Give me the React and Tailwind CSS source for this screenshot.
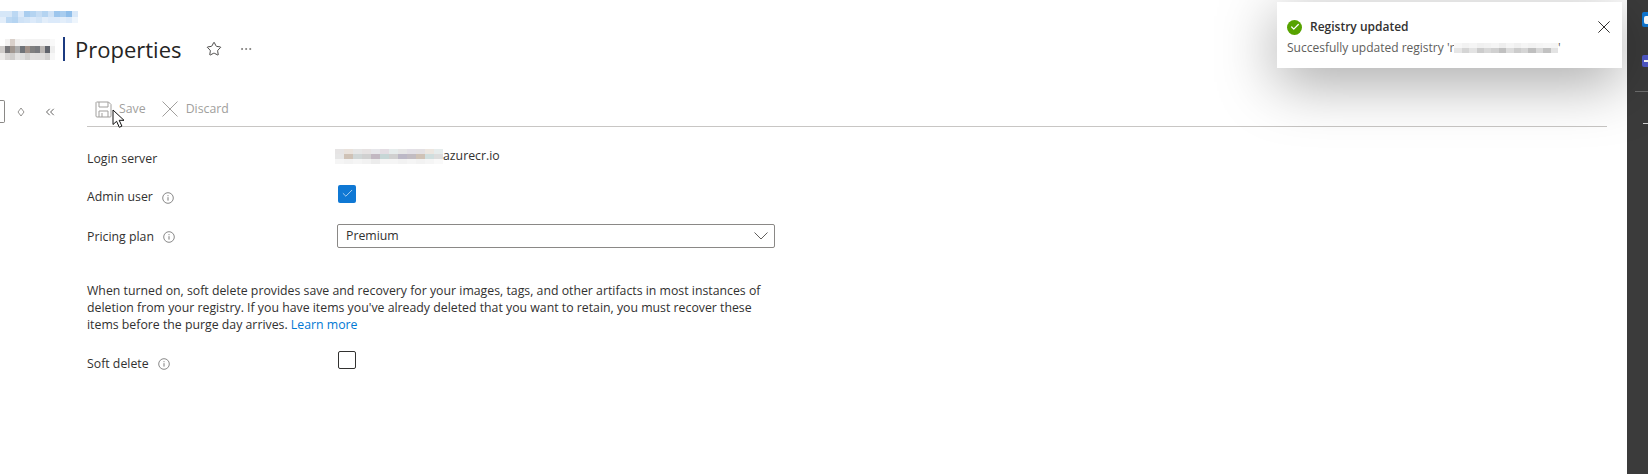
import React from "react";
import { Star, MoreHorizontal, ChevronsLeft, Check } from "lucide-react";

const font = "font-['Open_Sans','Noto_Sans',sans-serif]";

// blurred-out bits of the screenshot, each cell is one mosaic block
function Mosaic({ rows, cell = 6, rowHeight = 5 }) {
  return (
    <div className="flex flex-col shrink-0">
      {rows.map((row, i) => (
        <div key={i} className="flex">
          {row.map((c, j) => (
            <div key={j} style={{ background: c, width: cell, height: rowHeight }} />
          ))}
        </div>
      ))}
    </div>
  );
}

const crumb = [
  ["#d6e7f8", "#d6e7f8", "#bcd8f3", "#dceafa", "#a9cdef", "#b5d4f1", "#c6ddf4", "#b5d4f1", "#cfe2f6", "#9dc6ed", "#a9cdef", "#8fbeea", "#d9e8f8"],
  ["#e3eefa", "#bcd8f3", "#b5d4f1", "#cfe2f6", "#d3e5f7", "#dceafa", "#d3e5f7", "#e3eefa", "#dceafa", "#dceafa", "#e3eefa", "#dceafa", "#eef5fc"],
];
const titleBlur = [
  ["#ffffff", "#f3f2f1", "#d9d0ca", "#f0efee", "#f5f5f5", "#f3f3f3", "#f3f3f3", "#f3f3f3", "#f3f3f3", "#f3f3f3", "#f9f9f9"],
  ["#cfccca", "#77777a", "#a0968f", "#adadad", "#707378", "#a09189", "#808080", "#787a7e", "#b8b4b1", "#5f636b", "#eeeeee"],
  ["#ecebea", "#d8d6d5", "#cfcdcb", "#e3e2e1", "#dfdedd", "#d3d1cf", "#e0dfde", "#dfdedd", "#dfdedd", "#d2d1d0", "#f7f7f7"],
];
const serverBlur = [
  ["#e6e4e4", "#e9e2dc", "#e6e6e6", "#e6e2e2", "#e6e6ea", "#e3dde3", "#e6ecec", "#e6e6e6", "#e3e0e6", "#e3e0e3", "#ece6e0", "#e6ecec"],
  ["#e6e6e6", "#cfc2b6", "#d0d6d6", "#d0d0d0", "#c2b8c2", "#c6d6d6", "#d0d0d0", "#bcb8c6", "#c2bcc2", "#cfc2b6", "#d0dede", "#dddddd"],
  ["#f5f5f5", "#f2f2f2", "#f5f5f5", "#f2f2f2", "#ececec", "#f5f5f5", "#f5f5f5", "#f2f2f2", "#f5f5f5", "#f2f2f2", "#f5f5f5", "#f9f9f9"],
];
const toastBlur = [
  ["#f7f7f7", "#f2f2f2", "#f5f5f5", "#f0f0f0", "#f2f2f2", "#f5f5f5", "#eeeeee", "#f5f5f5", "#f0f0f0", "#f5f5f5", "#f2f2f2", "#f5f5f5", "#f7f7f7", "#f5f5f5"],
  ["#e6e6e6", "#d5d5d5", "#e3e3e3", "#cccccc", "#d8d8d8", "#d0d0d0", "#c0c0c0", "#dcdcdc", "#cccccc", "#d5d5d5", "#bfbfbf", "#d8d8d8", "#c2c2c2", "#e3e3e3"],
];

function InfoIcon({ className }) {
  return (
    <svg width="12" height="12" viewBox="0 0 12 12" fill="none" className={className}>
      <circle cx="6" cy="6" r="5.3" stroke="#7a7a7a" strokeWidth="0.9" />
      <path d="M6 5.2v3.4" stroke="#7a7a7a" strokeWidth="1" />
      <path d="M6 3.2v1" stroke="#7a7a7a" strokeWidth="1" />
    </svg>
  );
}

function Cross({ size, color }) {
  return (
    <svg width={size} height={size} viewBox="0 0 16 16" fill="none" className="shrink-0">
      <path d="M.5.5l15 15M15.5.5l-15 15" stroke={color} strokeWidth={16 / size} />
    </svg>
  );
}

function Row({ label, info, children, className }) {
  return (
    <div className={`flex items-center ${className}`}>
      <div className="w-[250px] flex items-center text-[12.3px] leading-[16px] text-[#323130]">
        {label}
        {info && <InfoIcon className="ml-[9px] mt-[1px]" />}
      </div>
      {children}
    </div>
  );
}

export default function App() {
  return (
    <div className={`relative flex w-[1648px] h-[474px] overflow-hidden bg-white ${font}`}>
      <div className="flex-1 min-w-0 flex flex-col">
        {/* Breadcrumb and title */}
        <div className="pt-[11px]">
          <Mosaic rows={crumb} rowHeight={6} />
        </div>
        <div className="flex items-center h-[36px] mt-[8px]">
          <Mosaic rows={titleBlur} cell={5} rowHeight={7} />
          <div className="w-[2px] h-[24px] ml-[8px] bg-[#1b3a80]" />
          <h1 className="ml-[10px] text-[22px] leading-[28px] text-[#252423]">Properties</h1>
          <Star className="ml-[24px] text-[#323130]" size={16} strokeWidth={1.3} />
          <MoreHorizontal className="ml-[17px] text-[#605e5c]" size={14} strokeWidth={1.2} />
        </div>

        <div className="flex mt-[28px]">
          {/* Collapsed resource menu */}
          <div className="w-[87px] shrink-0 flex items-start">
            <div className="w-[5px] h-[23px] mt-[5px] border border-l-0 border-[#8a8886] rounded-r-[2px]" />
            <svg width="8" height="10" viewBox="0 0 8 10" fill="none" className="ml-[12px] mt-[12px]">
              <path d="M4 1 7 5 4 9 1 5Z" stroke="#8a8886" strokeWidth="0.9" />
            </svg>
            <ChevronsLeft className="ml-[18px] mt-[10px] text-[#323130]" size={14} strokeWidth={1.3} />
          </div>

          <div className="flex-1 mr-[20px]">
            {/* Command bar */}
            <div className="flex items-center h-[32px] border-b border-[#c8c6c4] pb-[3px] text-[12.3px] text-[#a19f9d]">
              <svg width="17" height="17" viewBox="0 0 17 17" fill="none" className="ml-[8px]">
                <path d="M1.5 1h12L16 3.5V15a1 1 0 0 1-1 1H2a1 1 0 0 1-1-1V1.5Z" stroke="#a19f9d" />
                <path d="M4 1v5h9V1M4 16v-6h9v6M7 12v4" stroke="#a19f9d" />
              </svg>
              <span className="ml-[7px]">Save</span>
              <div className="ml-[16px]">
                <Cross size={16} color="#a19f9d" />
              </div>
              <span className="ml-[8px]">Discard</span>
            </div>

            {/* Form */}
            <Row label="Login server" className="mt-[22px] h-[20px]">
              <div className="flex items-center -mt-[6px] -ml-[2px]">
                <Mosaic rows={serverBlur} cell={9} rowHeight={5} />
                <span className="text-[12.3px] leading-[16px] text-[#323130]">azurecr.io</span>
              </div>
            </Row>
            <Row label="Admin user" info className="mt-[18px] h-[20px]">
              <div className="ml-[1px] -mt-[7px] w-[18px] h-[18px] rounded-[2px] bg-[#0f78d4] flex items-center justify-center">
                <Check className="text-white" size={13} strokeWidth={1.2} />
              </div>
            </Row>
            <Row label="Pricing plan" info className="mt-[18px] h-[23px]">
              <div className="w-[438px] h-[24px] -mt-[2px] border border-[#8a8886] rounded-[2px] flex items-center justify-between pl-[8px] pr-[6px] text-[12.3px] text-[#323130]">
                <span className="pt-[2px]">Premium</span>
                <svg width="14" height="8" viewBox="0 0 14 8" fill="none">
                  <path d="M.5.5 7 7 13.5.5" stroke="#605e5c" />
                </svg>
              </div>
            </Row>
            <p className="mt-[34px] w-[680px] text-[12.3px] leading-[17.2px] text-[#323130]">
              When turned on, soft delete provides save and recovery for your images, tags, and other artifacts in most instances of deletion from your registry. If you have items you've already deleted that you want to retain, you must recover these items before the purge day arrives. <span className="text-[#0078d4]">Learn more</span>
            </p>
            <Row label="Soft delete" info className="mt-[18px] h-[24px]">
              <div className="ml-[1px] -mt-[7px] w-[18px] h-[18px] rounded-[2px] border border-[#323130]" />
            </Row>
          </div>
        </div>
      </div>

      {/* Desktop side bar, cut off at the edge */}
      <div className="w-[21px] shrink-0 bg-[#3b3b3b] flex flex-col items-start">
        <div className="mt-[12px] ml-[15px] w-[6px] h-[15px] bg-[#0f78d4] rounded-l-[2px] flex items-center pl-[2px]">
          <div className="w-[4px] h-[8px] bg-white rounded-l-[2px]" />
        </div>
        <div className="mt-[28px] ml-[15px] w-[6px] h-[12px] bg-[#5059c9] rounded-l-[2px] flex items-center pl-[2px]">
          <div className="w-[4px] h-[2px] bg-white" />
        </div>
        <div className="mt-[24px] ml-[8px] w-[13px] h-px bg-[#6e6e6e]" />
        <div className="mt-[31px] ml-[16px] w-[5px] h-px bg-[#d0d0d0]" />
      </div>

      {/* Toast */}
      <div className="absolute left-[1277px] top-[2px] w-[345px] h-[66px] bg-white shadow-[0_14px_60px_rgba(0,0,0,0.36)] pl-[10px] pr-[12px] pt-[17px]">
        <div className="flex items-center">
          <div className="w-[15px] h-[15px] rounded-full bg-[#57a300] flex items-center justify-center">
            <Check className="text-white" size={10} strokeWidth={3} />
          </div>
          <span className="ml-[8px] text-[12px] leading-[16px] font-semibold text-[#323130]">Registry updated</span>
          <div className="ml-auto">
            <Cross size={12} color="#323130" />
          </div>
        </div>
        <div className="flex items-center mt-[5px] text-[12px] leading-[16px] text-[#605e5c]">
          <span>Succesfully updated registry 'r</span>
          <Mosaic rows={toastBlur} cell={7.4} rowHeight={5} />
          <span>'</span>
        </div>
      </div>

      {/* Mouse pointer */}
      <svg width="14" height="20" viewBox="0 0 14 20" className="absolute left-[112px] top-[109px]">
        <path d="M1 1v14.5l3.6-3.2 2.7 6 2.6-1.2-2.7-5.8h4.8Z" fill="#fff" stroke="#111" strokeWidth="1" />
      </svg>
    </div>
  );
}
